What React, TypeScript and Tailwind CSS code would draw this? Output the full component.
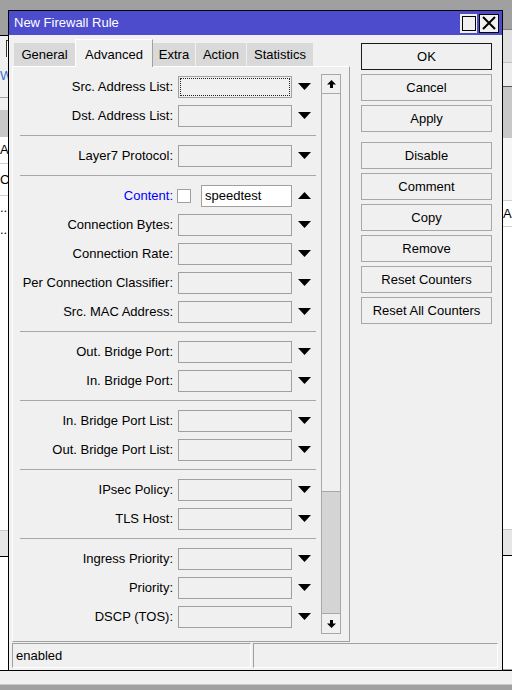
import React from 'react';

type Row = { kind: 'row'; label: string; focus?: boolean } | { kind: 'sep' } | { kind: 'content' };

const rows: Row[] = [
  { kind: 'row', label: 'Src. Address List:', focus: true },
  { kind: 'row', label: 'Dst. Address List:' },
  { kind: 'sep' },
  { kind: 'row', label: 'Layer7 Protocol:' },
  { kind: 'sep' },
  { kind: 'content' },
  { kind: 'row', label: 'Connection Bytes:' },
  { kind: 'row', label: 'Connection Rate:' },
  { kind: 'row', label: 'Per Connection Classifier:' },
  { kind: 'row', label: 'Src. MAC Address:' },
  { kind: 'sep' },
  { kind: 'row', label: 'Out. Bridge Port:' },
  { kind: 'row', label: 'In. Bridge Port:' },
  { kind: 'sep' },
  { kind: 'row', label: 'In. Bridge Port List:' },
  { kind: 'row', label: 'Out. Bridge Port List:' },
  { kind: 'sep' },
  { kind: 'row', label: 'IPsec Policy:' },
  { kind: 'row', label: 'TLS Host:' },
  { kind: 'sep' },
  { kind: 'row', label: 'Ingress Priority:' },
  { kind: 'row', label: 'Priority:' },
  { kind: 'row', label: 'DSCP (TOS):' },
];

const tabs = [
  { name: 'General', w: 'w-[61px]', gap: 'ml-[2px]' },
  { name: 'Advanced', w: 'w-[78px]', gap: '' },
  { name: 'Extra', w: 'w-[42px]', gap: '' },
  { name: 'Action', w: 'w-[50px]', gap: 'ml-[1px]' },
  { name: 'Statistics', w: 'w-[66px]', gap: 'ml-[1px]' },
];

const buttons = ['OK', 'Cancel', 'Apply', 'Disable', 'Comment', 'Copy', 'Remove', 'Reset Counters', 'Reset All Counters'];

function Down() {
  return (
    <svg width="13" height="7" viewBox="0 0 13 7">
      <polygon points="0,0 13,0 6.5,7" fill="#000" />
    </svg>
  );
}

function Up() {
  return (
    <svg width="13" height="7" viewBox="0 0 13 7">
      <polygon points="0,7 13,7 6.5,0" fill="#000" />
    </svg>
  );
}

function ScrollArrow({ down }: { down?: boolean }) {
  return (
    <svg width="9" height="8" viewBox="0 0 9 8" className={down ? 'rotate-180' : ''}>
      <polygon points="4.5,0 9,4.5 6,4.5 6,8 3,8 3,4.5 0,4.5" fill="#000" />
    </svg>
  );
}

export default function App() {
  return (
    <div className="relative w-[512px] h-[690px] overflow-hidden bg-[#a0a0a0] font-['Liberation_Sans',Arial,sans-serif] text-[13px] text-black">
      {/* windows behind, left edge */}
      <div className="absolute left-0 top-0 w-[8px] h-[690px] flex flex-col overflow-hidden">
        <div className="h-[35px] bg-[#a0a0a0]" />
        <div className="h-[1px] bg-black" />
        <div className="h-[61px] bg-[#f0f0f0] pt-[4px]">
          <div className="ml-[6px] h-[17px] border-l border-t border-[#333] bg-white" />
          <div className="mt-[12px] text-[#3b6fd8] leading-[14px]">W</div>
        </div>
        <div className="h-[1px] bg-[#a0a0a0]" />
        <div className="h-[12px] bg-[#f0f0f0]" />
        <div className="h-[27px] bg-[#c8c8c8]" />
        <div className="h-[26px] bg-white flex items-center whitespace-nowrap">Ad</div>
        <div className="h-[1px] bg-[#d0d0d0]" />
        <div className="h-[31px] bg-white flex items-center whitespace-nowrap">C</div>
        <div className="h-[1px] bg-[#d0d0d0]" />
        <div className="h-[22px] bg-white flex items-center whitespace-nowrap leading-none">...</div>
        <div className="h-[22px] bg-white flex items-center whitespace-nowrap leading-none">...</div>
        <div className="h-[290px] bg-white" />
        <div className="h-[26px] bg-[#e6e6e6] border-t border-[#c8c8c8]" />
        <div className="h-[1px] bg-black" />
        <div className="h-[113px] bg-white" />
        <div className="flex-1" />
      </div>

      {/* windows behind, right edge */}
      <div className="absolute right-0 top-0 w-[9px] h-[690px] flex flex-col overflow-hidden">
        <div className="h-[29px] bg-[#a0a0a0]" />
        <div className="h-[33px] bg-[#e0e0e0] border-t border-[#808080]" />
        <div className="h-[24px] bg-[#ececec] border-t border-[#c0c0c0]" />
        <div className="h-[52px] bg-[#c8c8c8] border-t border-[#555]" />
        <div className="h-[62px] bg-[#f6f6f6]" />
        <div className="h-[27px] bg-white border-t border-b border-[#d0d0d0] flex items-center whitespace-nowrap">Ad</div>
        <div className="h-[302px] bg-white" />
        <div className="h-[26px] bg-[#e6e6e6] border-t border-[#c8c8c8]" />
        <div className="h-[1px] bg-black" />
        <div className="h-[113px] bg-white" />
        <div className="flex-1" />
      </div>

      {/* desktop strip below the windows */}
      <div className="absolute left-0 top-[670px] w-[512px] h-[15px] bg-[#f0f0f0] border-t border-black border-b border-b-[#c8c8c8]" />

      {/* dialog */}
      <div className="absolute left-[8px] top-[10px] w-[495px] border border-black bg-[#f0f0f0] flex flex-col">
        <div className="h-[24px] bg-[#4c4ccc] flex items-center pl-[5px] pr-[3px]">
          <span className="text-white flex-1">New Firewall Rule</span>
          <div className="w-[17px] h-[19px] bg-[#f0f0f0] flex items-center justify-center">
            <div className="w-[14px] h-[15px] border border-black" />
          </div>
          <div className="ml-[2px] w-[20px] h-[19px] bg-[#f0f0f0] border border-black flex items-center justify-center">
            <svg width="14" height="14" viewBox="0 0 14 14">
              <path d="M1 1 L13 13 M13 1 L1 13" stroke="#000" strokeWidth="2" />
            </svg>
          </div>
        </div>

        <div className="flex pt-[3px] pl-[3px]">
          <div className="flex flex-col w-[338px]">
            <div className="flex items-end h-[28px]">
              {tabs.map((t) =>
                t.name === 'Advanced' ? (
                  <div
                    key={t.name}
                    className={`${t.w} ${t.gap} h-[28px] bg-[#f0f0f0] border-l border-t border-r border-l-white border-t-white border-r-[#a0a0a0] -mb-[1px] relative z-10 flex justify-center pt-[5px]`}
                  >
                    {t.name}
                  </div>
                ) : (
                  <div key={t.name} className={`${t.w} ${t.gap} h-[23px] bg-[#d9d9d9] flex items-center justify-center`}>
                    {t.name}
                  </div>
                )
              )}
            </div>
            <div className="h-[576px] border border-l-white border-t-white border-r-[#a0a0a0] border-b-[#a0a0a0] flex pr-[8px]">
              <div className="w-[308px] pt-[5px] flex flex-col">
                {rows.map((r, i) => {
                  if (r.kind === 'sep')
                    return (
                      <div key={i} className="h-[11px] flex items-center">
                        <div className="ml-[7px] w-[296px] h-[1px] bg-[#a8a8a8]" />
                      </div>
                    );
                  if (r.kind === 'content')
                    return (
                      <div key={i} className="h-[29px] flex items-center">
                        <div className="w-[160px] text-right text-[#0000ff] whitespace-nowrap">Content:</div>
                        <div className="ml-[4px] w-[14px] h-[14px] border border-[#a0a0a0] bg-white" />
                        <div className="ml-[10px] w-[91px] h-[22px] border border-[#a0a0a0] bg-white pl-[3px] flex items-center">
                          speedtest
                        </div>
                        <div className="ml-[6px] flex items-center">
                          <Up />
                        </div>
                      </div>
                    );
                  return (
                    <div key={i} className="h-[29px] flex items-center">
                      <div className="w-[160px] text-right whitespace-nowrap">{r.label}</div>
                      <div className="ml-[5px] w-[114px] h-[22px] border border-[#a0a0a0] bg-[#f0f0f0] p-[1px]">
                        {r.focus && <div className="h-full border border-dotted border-[#222]" />}
                      </div>
                      <div className="ml-[6px] flex items-center">
                        <Down />
                      </div>
                    </div>
                  );
                })}
              </div>
              <div className="mt-[7px] w-[20px] h-[560px] border border-[#a8a8a8] flex flex-col bg-[#d4d4d4]">
                <div className="h-[19px] bg-[#f0f0f0] border-b border-[#a8a8a8] flex items-center justify-center">
                  <ScrollArrow />
                </div>
                <div className="h-[398px] bg-[#f0f0f0] border-b border-[#a8a8a8]" />
                <div className="flex-1" />
                <div className="h-[20px] bg-[#f0f0f0] border-t border-[#a8a8a8] flex items-center justify-center">
                  <ScrollArrow down />
                </div>
              </div>
            </div>
          </div>

          <div className="ml-[11px] mt-[5px] w-[131px] flex flex-col">
            {buttons.map((b) => (
              <div
                key={b}
                className={`h-[27px] mb-[4px] bg-[#f0f0f0] border flex items-center justify-center whitespace-nowrap ${
                  b === 'OK' ? 'border-[#1a1a1a]' : 'border-[#a8a8a8]'
                } ${b === 'Disable' ? 'mt-[6px]' : ''}`}
              >
                {b}
              </div>
            ))}
          </div>
        </div>

        <div className="mt-[1px] pl-[3px] flex gap-[2px] pb-[2px]">
          <div className="w-[239px] h-[25px] border border-l-[#a0a0a0] border-t-[#a0a0a0] border-r-white border-b-white pl-[3px] flex items-center">
            enabled
          </div>
          <div className="w-[245px] h-[25px] border border-l-[#a0a0a0] border-t-[#a0a0a0] border-r-white border-b-white" />
        </div>
      </div>
    </div>
  );
}
